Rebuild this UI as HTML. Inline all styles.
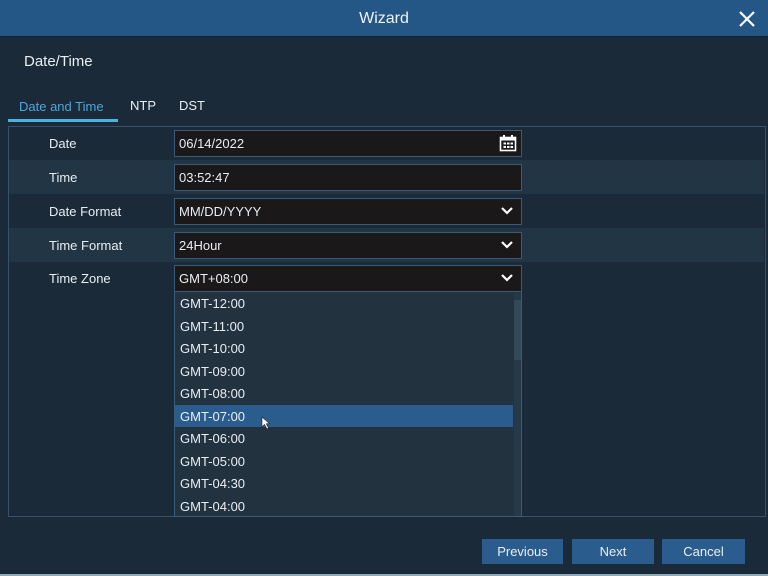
<!DOCTYPE html>
<html><head><style>
*{margin:0;padding:0;box-sizing:border-box}
body{width:768px;height:576px;background:#1b2a39;font-family:"Liberation Sans",sans-serif;color:#e8eef3;position:relative;overflow:hidden}
.abs{position:absolute}
.title{left:0;top:0;width:768px;height:37px;background:#245786;border-bottom:1px solid #10202e;text-align:center;font-size:16px;line-height:37px;color:#f0f4f8}
.row{left:9px;width:755px;height:34px}
.lab{font-size:13px;left:49px}
.inp{left:174px;width:348px;height:27px;background:#1a1818;border:1px solid #3b5a78;font-size:13px;line-height:25px;padding-left:4px}
.chev{position:absolute;right:8px;top:7px}
.item{left:180px;font-size:13px;height:22px;line-height:22px}
.btn{top:539px;height:25px;background:#2a5d8d;font-size:13px;line-height:25px;text-align:center;color:#e8eef3}
</style></head><body>
<div class="abs title">Wizard</div>
<svg class="abs" style="left:738px;top:10px" width="18" height="18"><path d="M2 2L16 16M16 2L2 16" stroke="#fff" stroke-width="2.2"/></svg>
<div class="abs" style="left:24px;top:53px;font-size:15px">Date/Time</div>
<div class="abs" style="left:19px;top:99px;font-size:13px;color:#4aa8dc">Date and Time</div>
<div class="abs" style="left:130px;top:98px;font-size:13px">NTP</div>
<div class="abs" style="left:179px;top:98px;font-size:13px">DST</div>
<div class="abs" style="left:8px;top:119px;width:110px;height:3px;background:#4ab4de"></div>
<div class="abs" style="left:8px;top:126px;width:758px;height:391px;border:1px solid #35526c;background:#1b2a39"></div>
<div class="abs row" style="top:160px;background:#223544"></div>
<div class="abs row" style="top:228px;background:#223544"></div>
<div class="abs lab" style="top:136px">Date</div>
<div class="abs lab" style="top:170px">Time</div>
<div class="abs lab" style="top:204px">Date Format</div>
<div class="abs lab" style="top:238px">Time Format</div>
<div class="abs lab" style="top:271px">Time Zone</div>
<div class="abs inp" style="top:130px">06/14/2022
<svg class="chev" style="top:3px;right:4px" width="18" height="18"><rect x="1.5" y="3.5" width="15" height="13" fill="none" stroke="#fff" stroke-width="1.6"/><rect x="1.5" y="3.5" width="15" height="3" fill="#fff"/><rect x="4" y="1" width="2" height="4" fill="#fff"/><rect x="12" y="1" width="2" height="4" fill="#fff"/><g fill="#fff"><rect x="4.5" y="8.5" width="2.5" height="2"/><rect x="8" y="8.5" width="2.5" height="2"/><rect x="11.5" y="8.5" width="2.5" height="2"/><rect x="4.5" y="12" width="2.5" height="2"/><rect x="8" y="12" width="2.5" height="2"/><rect x="11.5" y="12" width="2.5" height="2"/></g></svg></div>
<div class="abs inp" style="top:164px">03:52:47</div>
<div class="abs inp" style="top:198px">MM/DD/YYYY<svg class="chev" width="12" height="10"><path d="M1 2L6 7L11 2" fill="none" stroke="#fff" stroke-width="2.2"/></svg></div>
<div class="abs inp" style="top:232px">24Hour<svg class="chev" width="12" height="10"><path d="M1 2L6 7L11 2" fill="none" stroke="#fff" stroke-width="2.2"/></svg></div>
<div class="abs inp" style="top:265px">GMT+08:00<svg class="chev" width="12" height="10"><path d="M1 2L6 7L11 2" fill="none" stroke="#fff" stroke-width="2.2"/></svg></div>
<div class="abs" style="left:174px;top:292px;width:348px;height:225px;background:#22323f;border:1px solid #3b5a78;border-top:none"></div>
<div class="abs" style="left:514px;top:293px;width:7px;height:223px;background:#263947"></div>
<div class="abs" style="left:514px;top:300px;width:7px;height:60px;background:#34495a"></div>
<div class="abs" style="left:175px;top:405px;width:338px;height:22px;background:#2a5d8d"></div>
<div class="abs item" style="top:293px">GMT-12:00</div>
<div class="abs item" style="top:316px">GMT-11:00</div>
<div class="abs item" style="top:338px">GMT-10:00</div>
<div class="abs item" style="top:361px">GMT-09:00</div>
<div class="abs item" style="top:383px">GMT-08:00</div>
<div class="abs item" style="top:406px">GMT-07:00</div>
<div class="abs item" style="top:428px">GMT-06:00</div>
<div class="abs item" style="top:451px">GMT-05:00</div>
<div class="abs item" style="top:473px">GMT-04:30</div>
<div class="abs item" style="top:496px">GMT-04:00</div>
<svg class="abs" style="left:261px;top:416px" width="10" height="14"><path d="M1 1L1 11L3.5 8.5L6 13L7.5 12L5.2 7.8L8.5 7.5Z" fill="#fff" stroke="#222" stroke-width="0.6"/></svg>
<div class="abs btn" style="left:482px;width:81px">Previous</div>
<div class="abs btn" style="left:572px;width:82px">Next</div>
<div class="abs btn" style="left:662px;width:83px">Cancel</div>
<div class="abs" style="left:0;top:574px;width:768px;height:2px;background:#8da6b8"></div>
</body></html>
